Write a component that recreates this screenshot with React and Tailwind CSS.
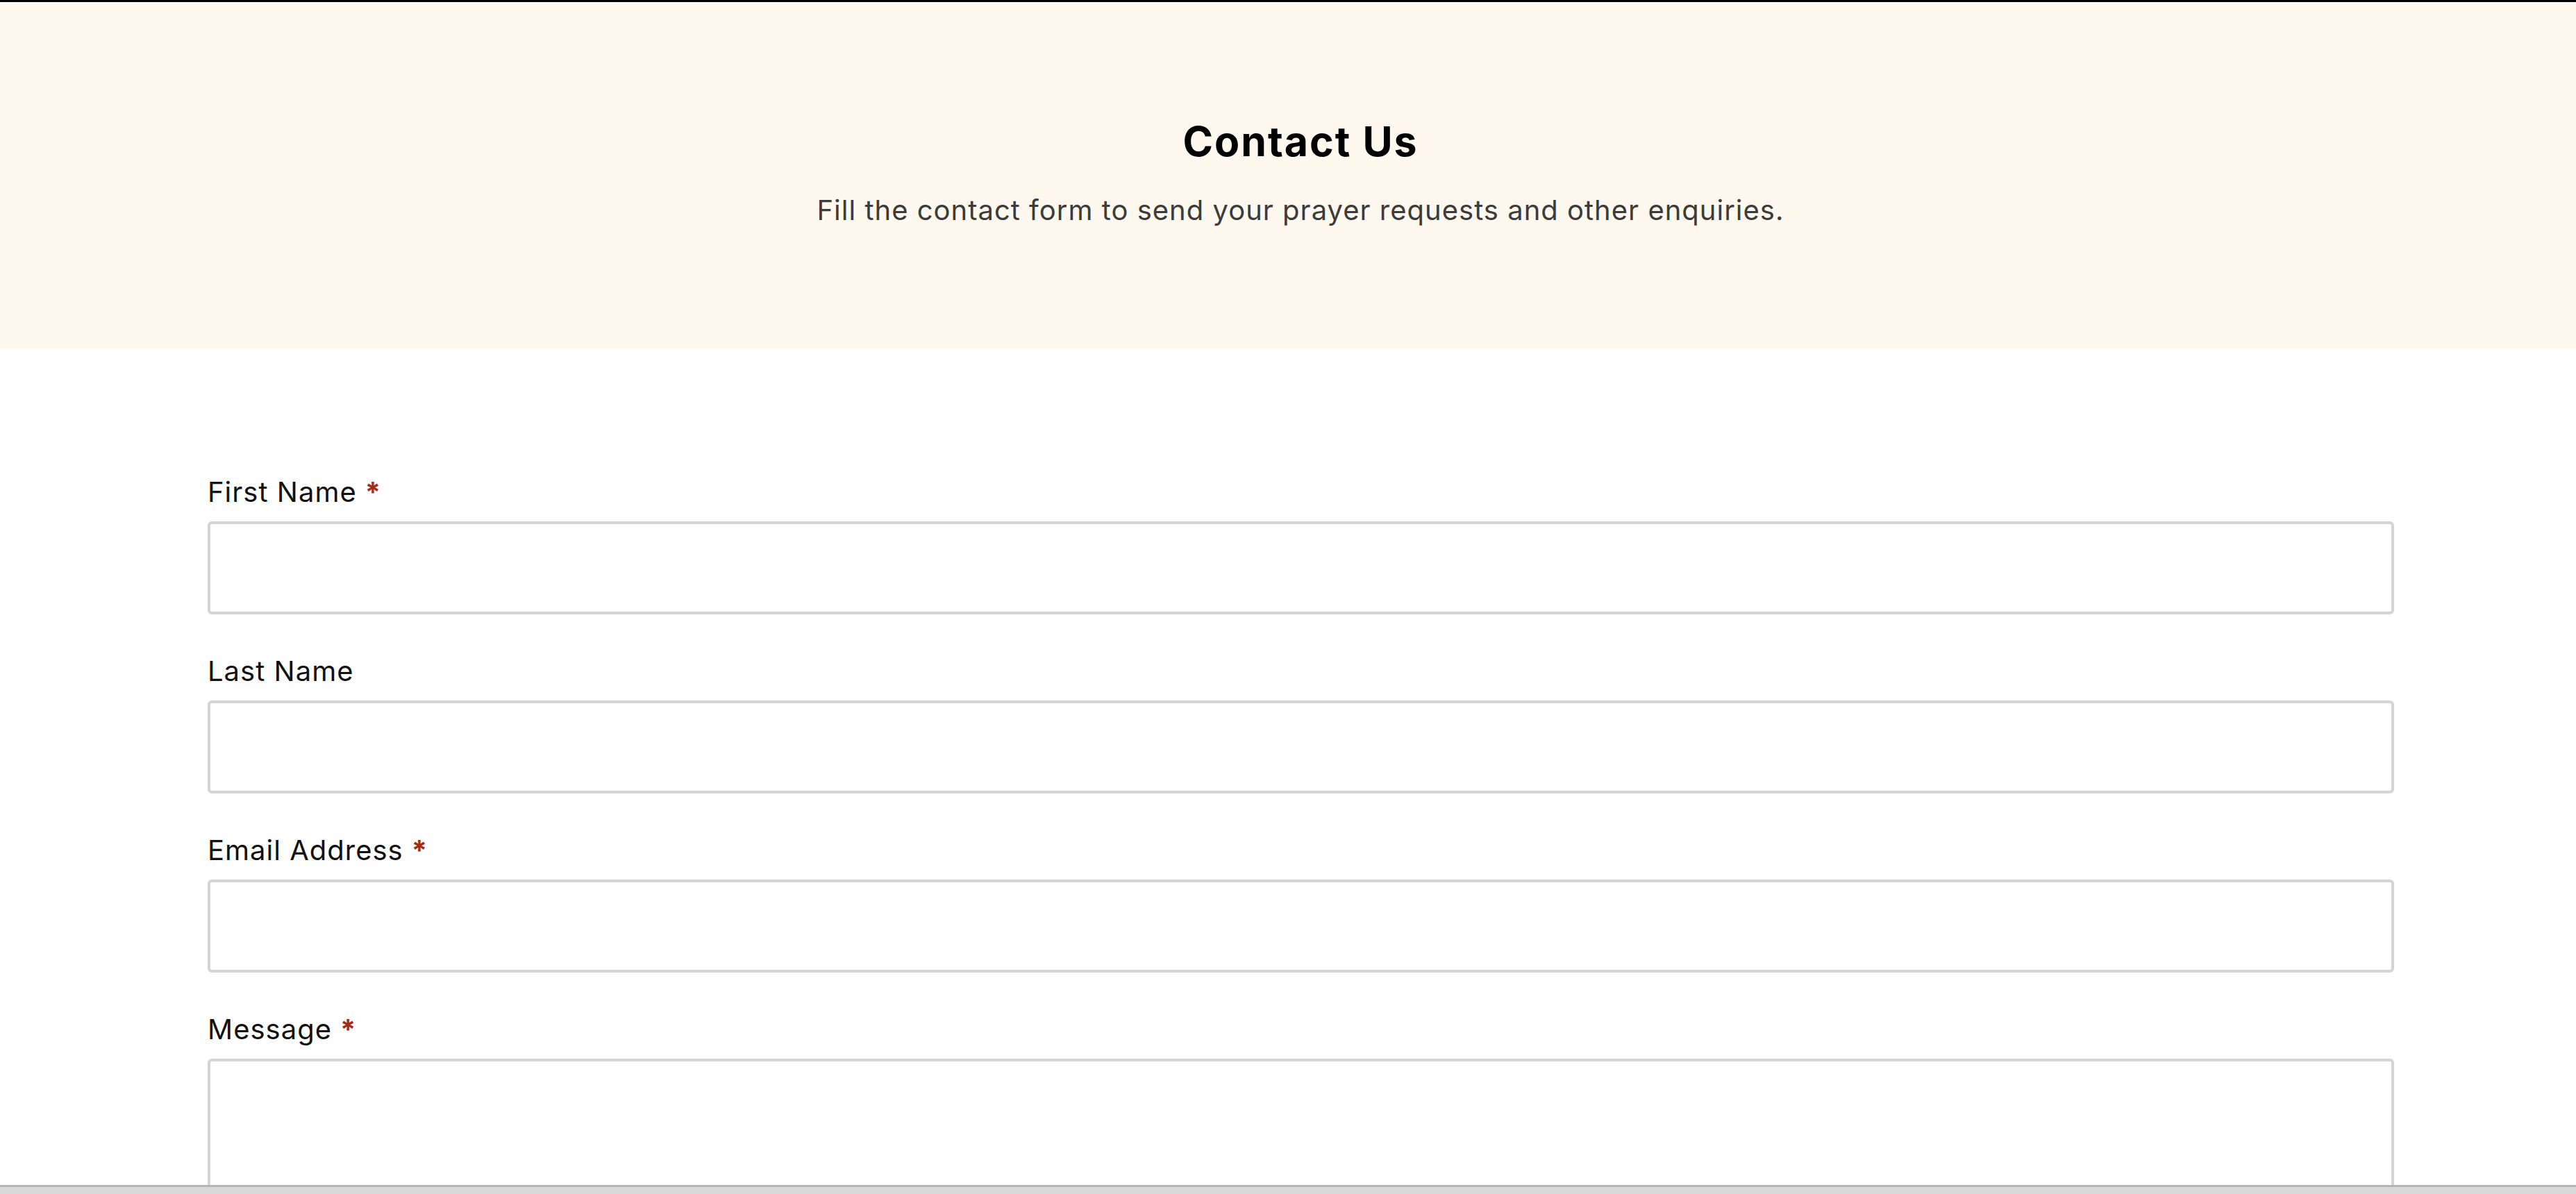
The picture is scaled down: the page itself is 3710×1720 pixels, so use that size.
import React from 'react'

const fields = [
  { label: 'First Name', required: true },
  { label: 'Last Name', required: false },
  { label: 'Email Address', required: true },
  { label: 'Message', required: true, area: true },
]

export default function App() {
  return (
    <div className="h-screen flex flex-col bg-white font-['Inter','Noto_Sans',sans-serif] overflow-hidden">
      <div className="flex-1 min-h-0 overflow-hidden">
        {/* Page header */}
        <header className="border-t-[3px] border-black bg-[#fff8ee] h-[503px] flex flex-col items-center pt-[171px] pl-[36px]">
          <h1 className="text-[59px] leading-[59px] font-bold text-black tracking-[2px]">Contact Us</h1>
          <p className="mt-[50px] text-[40px] leading-[40px] text-[#3b3b3b] tracking-[1px]">
            Fill the contact form to send your prayer requests and other enquiries.
          </p>
        </header>

        {/* Form */}
        <form className="pl-[299px] pt-[186px] w-[3448px] flex flex-col gap-[62px]">
          {fields.map((f) => (
            <div key={f.label} className="flex flex-col gap-[22px]">
              <label className="text-[40px] leading-[40px] text-[#111111] tracking-[1px]">
                {f.label}
                {f.required && <span className="ml-[12px] font-bold text-[#a52a0f]">*</span>}
              </label>
              {f.area ? (
                <textarea className="w-[3149px] h-[300px] border-4 border-[#d4d4d4] rounded-[6px] bg-white resize-none outline-none" />
              ) : (
                <input type="text" className="w-[3149px] h-[134px] border-4 border-[#d4d4d4] rounded-[6px] bg-white outline-none" />
              )}
            </div>
          ))}
        </form>
      </div>
      <div className="h-[13px] shrink-0 border-t-[3px] border-[#b5b5b5] bg-[#dadada]" />
    </div>
  )
}
